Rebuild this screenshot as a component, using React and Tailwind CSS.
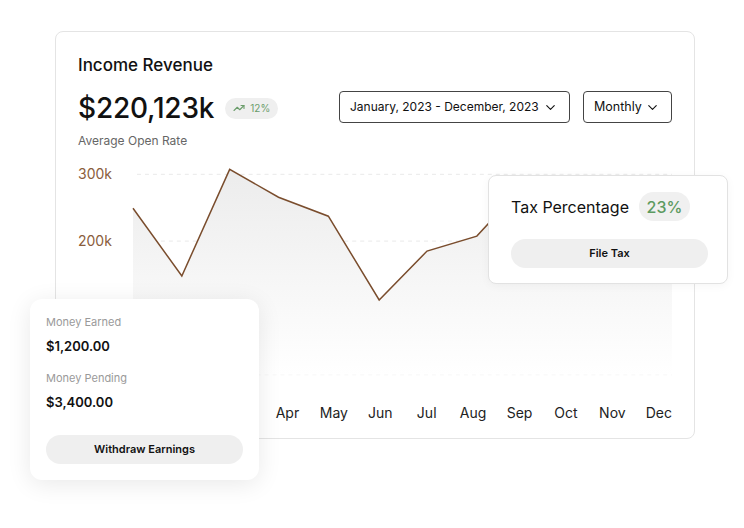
import React from "react";
import { ChevronDown, TrendingUp } from "lucide-react";

const months = ["Jan", "Feb", "Mar", "Apr", "May", "Jun", "Jul", "Aug", "Sep", "Oct", "Nov", "Dec"];

const points = [
  [1, 48], [50, 116], [98, 9], [147, 37], [197, 56], [248, 140],
  [296, 91], [346, 76], [370, 50], [420, 36], [470, 60], [510, 30], [542, 44],
];

const Chart = () => {
  const line = points.map((p) => p.join(",")).join(" ");
  const area = `M1,215 L${points.map((p) => p.join(",")).join(" L")} L542,215 Z`;
  return (
    <svg width="542" height="230" viewBox="0 0 542 230" className="block">
      <defs>
        <linearGradient id="fillGrad" x1="0" y1="0" x2="0" y2="1">
          <stop offset="0%" stopColor="#ececec" />
          <stop offset="100%" stopColor="#ffffff" />
        </linearGradient>
      </defs>
      {[14, 81, 148, 215].map((y) => (
        <line key={y} x1="5" x2="542" y1={y} y2={y} stroke="#e9e9e9" strokeDasharray="4 4" />
      ))}
      <path d={area} fill="url(#fillGrad)" />
      <polyline points={line} fill="none" stroke="#7a4d2d" strokeWidth="1.5" strokeLinejoin="miter" />
    </svg>
  );
};

const App = () => {
  return (
    <div className="relative w-[744px] h-[528px] bg-white overflow-hidden font-['Inter',sans-serif] text-[#111]">
      <div className="pt-[31px] pl-[55px]">
        <div className="w-[640px] h-[408px] rounded-lg border border-[#e4e4e4] bg-white px-[22px] pt-[21px]">
          <div className="flex justify-between items-start">
            <div>
              <div className="text-[17px] leading-[24px] font-medium">Income Revenue</div>
              <div className="flex items-center gap-[11px] mt-[13px]">
                <div className="text-[28px] leading-[36px] font-medium tracking-[-0.2px]">$220,123k</div>
                <div className="flex items-center gap-[5px] h-[21px] px-[8px] rounded-full bg-[#efefef] text-[10px] text-[#6c9d6c]">
                  <TrendingUp size={12} strokeWidth={2.2} />
                  <span>12%</span>
                </div>
              </div>
              <div className="text-[12px] leading-[16px] text-[#666] mt-[7px]">Average Open Rate</div>
            </div>
            <div className="flex gap-[13px] mt-[38px]">
              <div className="flex items-center justify-between w-[231px] h-[32px] pl-[10px] pr-[11px] rounded border border-[#444] text-[12px] whitespace-nowrap">
                <span>January, 2023 - December, 2023</span>
                <ChevronDown size={15} strokeWidth={1.8} className="shrink-0" />
              </div>
              <div className="flex items-center justify-between w-[89px] h-[32px] pl-[10px] pr-[11px] rounded border border-[#444] text-[12.5px] whitespace-nowrap">
                <span>Monthly</span>
                <ChevronDown size={15} strokeWidth={1.8} className="shrink-0" />
              </div>
            </div>
          </div>
          <div className="flex mt-[11px]">
            <div className="w-[54px] text-[14px] leading-[20px] text-[#8a5d3c]">
              <div className="mt-[4px]">300k</div>
              <div className="mt-[47px]">200k</div>
            </div>
            <Chart />
          </div>
          <div className="grid grid-cols-12 ml-[47px] w-[557px] mt-[13px] text-[14px] leading-[20px] text-[#222]">
            {months.map((m) => (
              <div key={m} className="text-center">{m}</div>
            ))}
          </div>
        </div>
      </div>

      <div className="absolute left-[488px] top-[175px] w-[240px] h-[109px] rounded-lg border border-[#e2e2e2] bg-white px-[22px] pt-[16px] shadow-[0_2px_10px_rgba(0,0,0,0.04)]">
        <div className="flex items-center gap-[10px]">
          <span className="text-[16px] leading-[24px]">Tax Percentage</span>
          <span className="flex items-center justify-center w-[51px] h-[29px] rounded-full bg-[#f0f0f0] text-[16px] font-medium text-[#5c9a60]">23%</span>
        </div>
        <div className="mt-[18px] w-[197px] h-[29px] rounded-full bg-[#efefef] flex items-center justify-center text-[11px] font-semibold">
          File Tax
        </div>
      </div>

      <div className="absolute left-[30px] top-[299px] w-[229px] h-[181px] rounded-xl bg-white px-[16px] pt-[15px] shadow-[0_4px_24px_rgba(0,0,0,0.09)]">
        <div className="text-[11px] leading-[16px] text-[#9a9a9a]">Money Earned</div>
        <div className="mt-[7px] text-[13px] leading-[18px] font-semibold">$1,200.00</div>
        <div className="mt-[15px] text-[11px] leading-[16px] text-[#9a9a9a]">Money Pending</div>
        <div className="mt-[7px] text-[13px] leading-[18px] font-semibold">$3,400.00</div>
        <div className="mt-[24px] w-[197px] h-[29px] rounded-full bg-[#efefef] flex items-center justify-center text-[11px] font-semibold">
          Withdraw Earnings
        </div>
      </div>
    </div>
  );
};

export default App;
